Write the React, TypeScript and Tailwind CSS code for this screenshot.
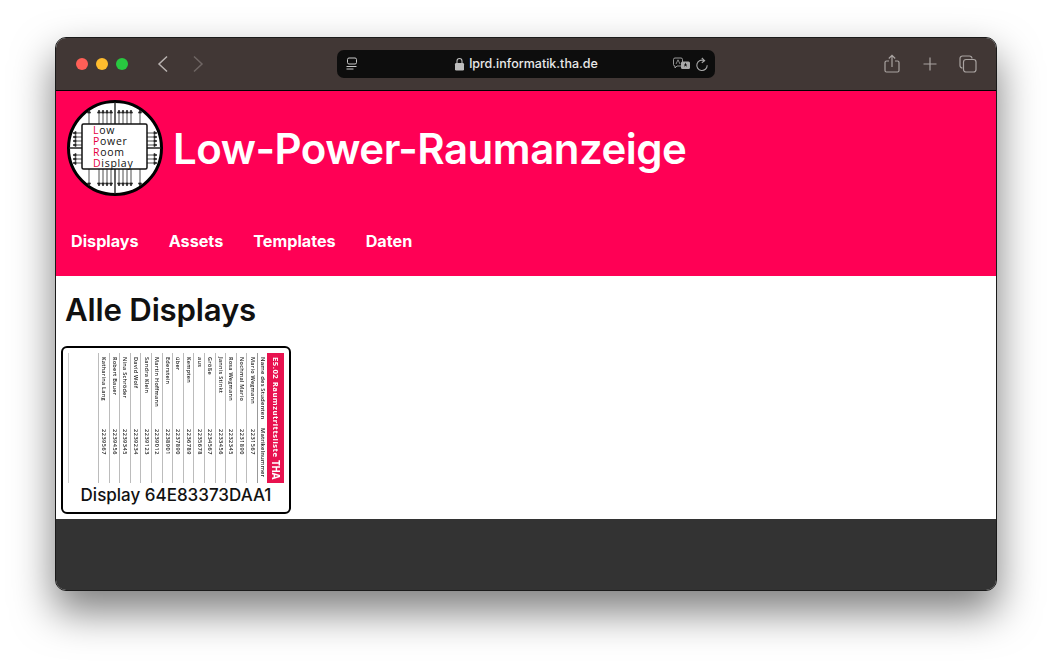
const rows = [
  ["Katharina Lang", "2239567"],
  ["Robert Bauer", "2239456"],
  ["Nina Schröder", "2239345"],
  ["David Wolf", "2239234"],
  ["Sandra Klein", "2239123"],
  ["Martin Hoffmann", "2239012"],
  ["Ederstein", "2238901"],
  ["über", "2237890"],
  ["Kempten", "2236789"],
  ["aus", "2235678"],
  ["Größe", "2234567"],
  ["Jannis Stinkt", "2233456"],
  ["Rosa Wegmann", "2232345"],
  ["Nochmal Mario", "2231890"],
  ["Mario Wegmann", "2231567"],
];

function Logo() {
  const xs = [22, 32, 36, 40, 44, 52, 56, 60, 64, 73];
  const ys = [33, 37, 41, 45, 55, 59, 63];
  return (
    <svg width="96" height="96" viewBox="0 0 96 96" className="shrink-0">
      <circle cx="48" cy="48" r="46.5" fill="#fff" stroke="#000" strokeWidth="3" />
      <g stroke="#222" strokeWidth="0.8" fill="#222">
        <line x1="48" y1="2" x2="48" y2="94" strokeWidth="1.4" />
        <line x1="2" y1="48" x2="94" y2="48" strokeWidth="1.4" />
        {xs.map((x) => (
          <g key={x}>
            <line x1={x} y1="12" x2={x} y2="24" />
            <path d={`M${x - 1.5} 13 L${x} 10 L${x + 1.5} 13 Z`} />
            <line x1={x} y1="68" x2={x} y2="84" />
            <path d={`M${x - 1.5} 83 L${x} 86 L${x + 1.5} 83 Z`} />
          </g>
        ))}
        {ys.map((y) => (
          <g key={y}>
            <line x1="8" y1={y} x2="16" y2={y} />
            <path d={`M9 ${y - 1.5} L6 ${y} L9 ${y + 1.5} Z`} />
            <line x1="80" y1={y} x2="88" y2={y} />
            <path d={`M87 ${y - 1.5} L90 ${y} L87 ${y + 1.5} Z`} />
          </g>
        ))}
      </g>
      <rect x="15" y="24" width="65" height="45" rx="1.5" fill="#fff" stroke="#111" strokeWidth="1.5" />
      <g fontSize="10.5" letterSpacing="0.7" fontWeight="500" fontFamily="'Open Sans', sans-serif" fill="#111">
        <text x="26" y="34"><tspan fill="#e4003f">L</tspan>ow</text>
        <text x="26" y="45"><tspan fill="#e4003f">P</tspan>ower</text>
        <text x="26" y="56"><tspan fill="#e4003f">R</tspan>oom</text>
        <text x="26" y="67"><tspan fill="#e4003f">D</tspan>isplay</text>
      </g>
    </svg>
  );
}

function Row({ name, num }: { name: string; num: string }) {
  return (
    <div className="w-[10.6px] h-[130px] shrink-0 border-l-[1.5px] border-[#bcbcbc] [writing-mode:vertical-rl] flex items-center pt-[4px] text-[5.5px] leading-[9px] tracking-[0.25px] text-[#222] font-semibold whitespace-nowrap">
      <span className="h-[72px] shrink-0">{name}</span>
      <span className="tracking-[0.55px]">{num}</span>
    </div>
  );
}

export default function App() {
  return (
    <div className="w-[1052px] h-[664px] bg-white pl-[56px] pt-[38px] overflow-hidden font-['Inter',sans-serif]">
      <div className="w-[940px] h-[552px] rounded-[10px] overflow-hidden flex flex-col outline outline-1 outline-[#1a1a1a] shadow-[0_20px_40px_2px_rgba(0,0,0,0.5)]">
        <div className="h-[53px] shrink-0 bg-[#413735] border-b border-black flex items-center pl-[20px] pr-[19px]">
          <div className="flex gap-[8px]">
            <div className="w-[12px] h-[12px] rounded-full bg-[#ff5f57]" />
            <div className="w-[12px] h-[12px] rounded-full bg-[#febc2e]" />
            <div className="w-[12px] h-[12px] rounded-full bg-[#28c840]" />
          </div>
          <svg width="14" height="18" viewBox="0 0 14 18" fill="none" stroke="#b8b2b0" strokeWidth="1.5" className="ml-[28px]">
            <path d="M11 1.5 L3 9 L11 16.5" />
          </svg>
          <svg width="14" height="18" viewBox="0 0 14 18" fill="none" stroke="#6e6563" strokeWidth="1.5" className="ml-[21px]">
            <path d="M3 1.5 L11 9 L3 16.5" />
          </svg>
          <div className="ml-[132px] w-[378px] h-[28px] rounded-[7px] bg-[#0d0d0d] flex items-center pl-[8px] pr-[6px]">
            <svg width="14" height="14" viewBox="0 0 14 14" fill="none" stroke="#c9c9c9" strokeWidth="1">
              <rect x="2.5" y="1" width="9" height="6" rx="1.5" />
              <path d="M1.5 9.5h10M1.5 12h7" />
            </svg>
            <div className="flex-1 flex items-center justify-center gap-[4px] pl-[21px]">
              <svg width="11" height="14" viewBox="0 0 11 14" fill="#bdbdbd">
                <rect x="1" y="6" width="9" height="7.5" rx="1.2" />
                <path d="M3 6.5V4a2.5 2.5 0 0 1 5 0v2.5" fill="none" stroke="#bdbdbd" strokeWidth="1.1" />
              </svg>
              <span className="text-[12.5px] font-medium text-[#e8e8e8]">lprd.informatik.tha.de</span>
            </div>
            <svg width="19" height="14" viewBox="0 0 19 14" className="mr-[4px]">
              <path d="M1.5 2.5a1.5 1.5 0 0 1 1.5-1.5h6a1.5 1.5 0 0 1 1.5 1.5v5a1.5 1.5 0 0 1-1.5 1.5H5l-2 2V9a1.5 1.5 0 0 1-1.5-1.5z" fill="none" stroke="#a8a8a8" strokeWidth="0.9" />
              <rect x="9" y="4.5" width="9" height="7.5" rx="1.5" fill="#a8a8a8" />
              <path d="M13.5 5.5 L15 9.8 L11.8 7.4 L15.2 7.4 L12 9.8 Z" fill="#0d0d0d" />
              <path d="M4 7 L6 2.8 L8 7" fill="none" stroke="#a8a8a8" strokeWidth="0.8" />
            </svg>
            <svg width="14" height="15" viewBox="0 0 14 15" fill="none" stroke="#a8a8a8" strokeWidth="1.1">
              <path d="M9.2 3.6 A5.2 5.2 0 1 0 12.2 8.3" />
              <path d="M6.8 1 L9.6 3.6 L6.8 5.8" />
            </svg>
          </div>
          <div className="ml-auto flex items-center gap-[21px]">
            <svg width="18" height="20" viewBox="0 0 18 20" fill="none" stroke="#a9a3a1" strokeWidth="1.2">
              <path d="M9 13V1.5M5.8 4.5 L9 1.3 L12.2 4.5" />
              <path d="M6 7H3.5a1.5 1.5 0 0 0-1.5 1.5v8A1.5 1.5 0 0 0 3.5 18h11a1.5 1.5 0 0 0 1.5-1.5v-8A1.5 1.5 0 0 0 14.5 7H12" />
            </svg>
            <svg width="16" height="16" viewBox="0 0 16 16" fill="none" stroke="#a9a3a1" strokeWidth="1.2">
              <path d="M8 1.5v13M1.5 8h13" />
            </svg>
            <svg width="18" height="18" viewBox="0 0 18 18" fill="none" stroke="#a9a3a1" strokeWidth="1.2">
              <path d="M3.5 13A2.5 2.5 0 0 1 1 10.5V3.5A2.5 2.5 0 0 1 3.5 1h7A2.5 2.5 0 0 1 13 3.5" />
              <rect x="4.5" y="4.5" width="12.5" height="12.5" rx="2.5" />
            </svg>
          </div>
        </div>

        <div className="h-[185px] shrink-0 bg-[#ff0055] text-white">
          <div className="flex items-center pl-[11px] pt-[9px] gap-[10px]">
            <Logo />
            <h1 className="mt-[2px] text-[42px] leading-[50px] font-semibold tracking-[-0.5px]">Low-Power-Raumanzeige</h1>
          </div>
          <nav className="flex gap-[30px] pl-[15px] mt-[35px] text-[16.2px] leading-[20px] font-bold">
            <span>Displays</span>
            <span>Assets</span>
            <span>Templates</span>
            <span>Daten</span>
          </nav>
        </div>

        <main className="bg-white shrink-0 px-[5px] pt-[15px] pb-[5px]">
          <h2 className="pl-[4px] text-[31.2px] leading-[38px] font-semibold text-[#111] tracking-[-0.2px]">Alle Displays</h2>
          <div className="mt-[17px] w-[230px] h-[168px] border-2 border-black rounded-[6px] p-[5px] flex flex-col">
            <div className="h-[130px] w-[216px] shrink-0 flex overflow-hidden blur-[0.5px] font-['Open_Sans',sans-serif]">
              <div className="w-[30px] shrink-0 border-l border-[#cfcfcf]" />
              {rows.map((r) => (
                <Row key={r[0]} name={r[0]} num={r[1]} />
              ))}
              <div className="w-[10.5px] h-[130px] shrink-0 border-l-[1.5px] border-[#999] pt-[4px] [writing-mode:vertical-rl] flex items-center text-[5.8px] leading-[9px] font-semibold text-[#222] whitespace-nowrap">
                <span className="h-[71px] shrink-0 tracking-[0.2px]">Name des Studenten</span>
                <span className="tracking-[0.1px]">Matrikelnummer</span>
              </div>
              <div className="flex-1 h-[130px] bg-[#e8124f] text-white font-bold [writing-mode:vertical-rl] flex items-center pt-[4px] pb-[4px] whitespace-nowrap">
                <span className="text-[7.8px] leading-[16px] tracking-[0.45px]">E5.02 Raumzutrittsliste</span>
                <span className="mt-auto text-[10px] leading-[16px] tracking-[-0.5px]">THA</span>
              </div>
            </div>
            <div className="flex-1 flex items-center justify-center text-[17px] leading-[20px] font-medium text-[#111]">Display 64E83373DAA1</div>
          </div>
        </main>

        <div className="flex-1 bg-[#333333]" />
      </div>
    </div>
  );
}
